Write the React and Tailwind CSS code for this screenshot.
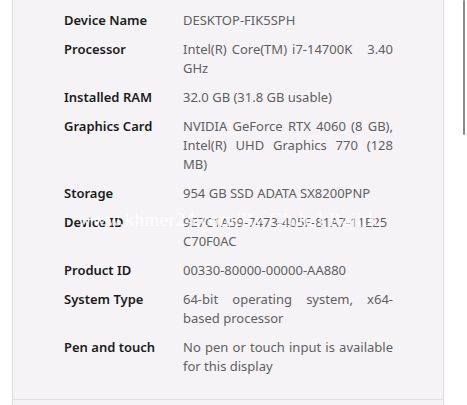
import React from 'react'

const specs = [
  { label: 'Device Name', lines: ['DESKTOP-FIK5SPH'] },
  { label: 'Processor', lines: ['Intel(R) Core(TM) i7-14700K\u00a0\u00a0\u00a03.40', 'GHz'] },
  { label: 'Installed RAM', lines: ['32.0 GB (31.8 GB usable)'] },
  { label: 'Graphics Card', lines: ['NVIDIA GeForce RTX 4060 (8 GB),', 'Intel(R) UHD Graphics 770 (128', 'MB)'] },
  { label: 'Storage', lines: ['954 GB SSD ADATA SX8200PNP'] },
  { label: 'Device ID', lines: ['9E7C1A59-7473-405F-81A7-11E25', 'C70F0AC'] },
  { label: 'Product ID', lines: ['00330-80000-00000-AA880'] },
  { label: 'System Type', lines: ['64-bit operating system, x64-', 'based processor'] },
  { label: 'Pen and touch', lines: ['No pen or touch input is available', 'for this display'] },
]

function SpecRow({ label, lines }) {
  return (
    <div className="flex">
      <div className="w-[119px] shrink-0 font-semibold text-[#1b1b1b]">{label}</div>
      <div className="w-[210px] text-[#5f5f5f]">
        {lines.map((line, i) => (
          <div
            key={i}
            className={i < lines.length - 1 ? 'text-justify [text-align-last:justify] whitespace-pre' : 'whitespace-pre'}
          >
            {line}
          </div>
        ))}
      </div>
    </div>
  )
}

export default function App() {
  return (
    <div className="relative h-[405px] w-[467px] overflow-hidden bg-white" style={{ fontFamily: '"Noto Sans", "Open Sans", sans-serif' }}>
      <div className="ml-[12px] w-[432px] h-full border-x border-[#dedbdf] bg-[#f5f3f6] flex flex-col">
        <div className="flex flex-col gap-[10px] pl-[51px] pt-[11px] text-[13px] leading-[19px]">
          {specs.map(s => (
            <SpecRow key={s.label} {...s} />
          ))}
        </div>
        <div className="mt-auto mb-[5px] border-t border-[#e2dfe3]" />
      </div>

      {/* watermark */}
      <div className="absolute left-[78px] top-[206px] text-[19px] text-white/80 tracking-wide pointer-events-none" style={{ fontFamily: '"Liberation Serif", serif' }}>
        www.khmer24.com/By Global Rajith
      </div>

      {/* scrollbar */}
      <div className="absolute left-[463px] top-0 h-[135px] w-[2px] rounded-full bg-[#8a8a8a]" />
    </div>
  )
}
